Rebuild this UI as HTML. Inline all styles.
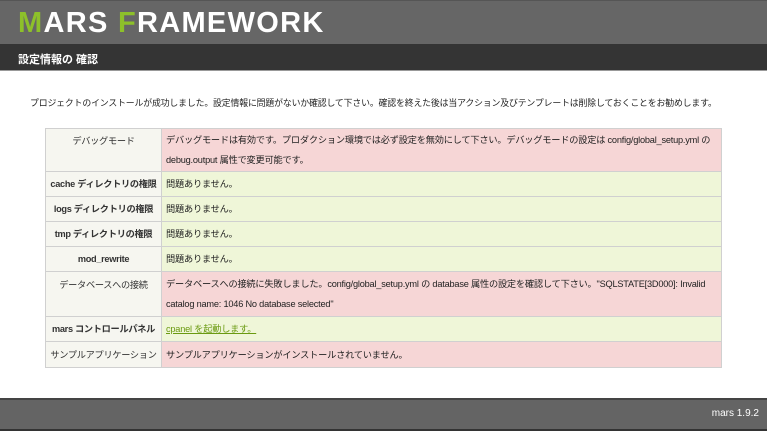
<!DOCTYPE html><html><head><meta charset="utf-8"><style>
*{margin:0;padding:0;box-sizing:border-box}
body{width:767px;height:431px;position:relative;background:#fff;font-family:"Liberation Sans","Noto Sans CJK JP",sans-serif;font-size:10px;color:#222;overflow:hidden}
.hd{position:absolute;left:0;top:0;width:767px;height:44px;background:#666;border-top:1px solid #555}
.logo{position:absolute;left:18px;top:5px;font-size:29px;color:#fff;letter-spacing:1.3px;font-family:"Liberation Sans",sans-serif;font-weight:bold;line-height:34px;white-space:nowrap}
.logo b{color:#8dc02a}
.bar{position:absolute;left:0;top:44px;width:767px;height:27px;background:#343434;color:#fff;font-size:11px;padding:7px 0 0 18px;font-weight:bold;border-bottom:1px solid #999}
.intro{position:absolute;left:30px;top:96px;font-size:8.9px;white-space:nowrap;letter-spacing:-0.15px}
table{position:absolute;left:45px;top:128px;width:677px;border-collapse:collapse;table-layout:fixed}
td{border:1px solid #d0d0d0;padding:0 4px;font-size:9.2px;line-height:20px;overflow:hidden}
td.k{width:116px;background:#f6f6f0;text-align:center;color:#333;white-space:nowrap;padding:0 1px;letter-spacing:-0.3px}
td.k.b{font-weight:bold}
td.v{letter-spacing:-0.2px}
.r td.v{background:#f6d6d6}
.g td.v{background:#eff6d8}
a{color:#6a9a10;text-decoration:underline}
.ft{position:absolute;left:0;top:398px;width:767px;height:33px;background:#646464;border-top:2px solid #444;border-bottom:2px solid #333}
.ft span{position:absolute;right:8px;top:8px;color:#fff;font-size:10px}
</style></head><body>
<div class="hd"><div class="logo"><b>M</b>ARS <b>F</b>RAMEWORK</div></div>
<div class="bar">設定情報の 確認</div>
<div class="intro">プロジェクトのインストールが成功しました。設定情報に問題がないか確認して下さい。確認を終えた後は当アクション及びテンプレートは削除しておくことをお勧めします。</div>
<table>
<colgroup><col style="width:116px"><col></colgroup>
<tr class="r" style="height:43px"><td class="k" style="vertical-align:top;padding-top:2px">デバッグモード</td><td class="v">デバッグモードは有効です。プロダクション環境では必ず設定を無効にして下さい。デバッグモードの設定は config/global_setup.yml の debug.output 属性で変更可能です。</td></tr>
<tr class="g" style="height:25px"><td class="k b">cache ディレクトリの権限</td><td class="v">問題ありません。</td></tr>
<tr class="g" style="height:25px"><td class="k b">logs ディレクトリの権限</td><td class="v">問題ありません。</td></tr>
<tr class="g" style="height:25px"><td class="k b">tmp ディレクトリの権限</td><td class="v">問題ありません。</td></tr>
<tr class="g" style="height:25px"><td class="k b">mod_rewrite</td><td class="v">問題ありません。</td></tr>
<tr class="r" style="height:45px"><td class="k" style="vertical-align:top;padding-top:3px">データベースへの接続</td><td class="v">データベースへの接続に失敗しました。config/global_setup.yml の database 属性の設定を確認して下さい。"SQLSTATE[3D000]: Invalid catalog name: 1046 No database selected"</td></tr>
<tr class="g" style="height:25px"><td class="k b">mars コントロールパネル</td><td class="v"><a>cpanel を起動します。</a></td></tr>
<tr class="r" style="height:26px"><td class="k">サンプルアプリケーション</td><td class="v">サンプルアプリケーションがインストールされていません。</td></tr>
</table>
<div class="ft"><span>mars 1.9.2</span></div>
</body></html>
